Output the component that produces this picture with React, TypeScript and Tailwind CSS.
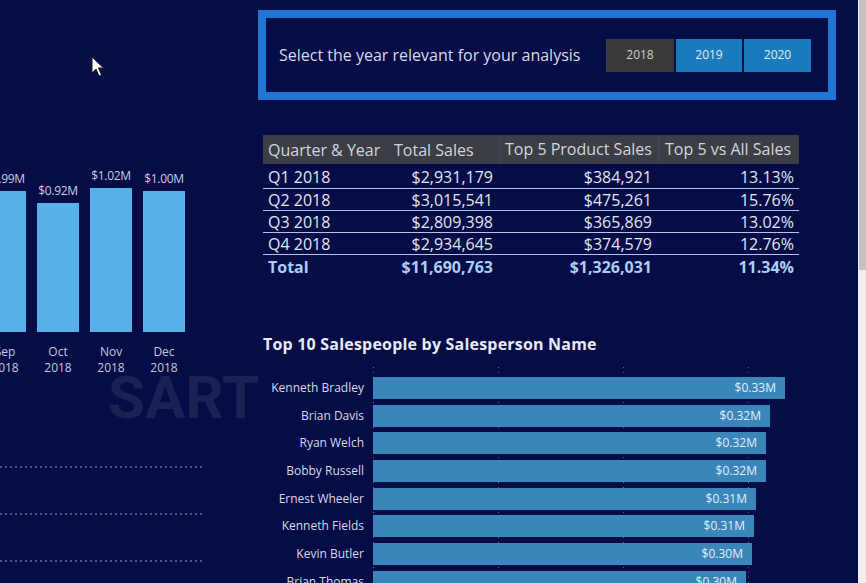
import React from 'react';

const months = [
  { value: '$0.99M', height: 141, month: 'Sep' },
  { value: '$0.92M', height: 129, month: 'Oct' },
  { value: '$1.02M', height: 144, month: 'Nov' },
  { value: '$1.00M', height: 141, month: 'Dec' },
];

const quarters = [
  { q: 'Q1 2018', total: '$2,931,179', top5: '$384,921', pct: '13.13%' },
  { q: 'Q2 2018', total: '$3,015,541', top5: '$475,261', pct: '15.76%' },
  { q: 'Q3 2018', total: '$2,809,398', top5: '$365,869', pct: '13.02%' },
  { q: 'Q4 2018', total: '$2,934,645', top5: '$374,579', pct: '12.76%' },
];

const salespeople = [
  { name: 'Kenneth Bradley', value: '$0.33M', width: 412 },
  { name: 'Brian Davis', value: '$0.32M', width: 397 },
  { name: 'Ryan Welch', value: '$0.32M', width: 393 },
  { name: 'Bobby Russell', value: '$0.32M', width: 393 },
  { name: 'Ernest Wheeler', value: '$0.31M', width: 383 },
  { name: 'Kenneth Fields', value: '$0.31M', width: 381 },
  { name: 'Kevin Butler', value: '$0.30M', width: 379 },
  { name: 'Brian Thomas', value: '$0.30M', width: 373 },
];

const Cursor = () => (
  <svg
    className="absolute left-[91px] top-[56px]"
    width="14"
    height="22"
    viewBox="0 0 14 22"
  >
    <path
      d="M1 1 L1 17 L5 13 L8 20 L10.5 19 L7.5 12 L12.5 12 Z"
      fill="#ffffff"
      stroke="#1a1a1a"
      strokeWidth="1"
      strokeLinejoin="round"
    />
  </svg>
);

const DottedLine = () => (
  <div className="h-[2px] w-[205px] bg-[repeating-linear-gradient(90deg,#4a5590_0_2px,transparent_2px_5px)]" />
);

const MonthlyChart = () => (
  <div className="relative w-[258px] shrink-0">
    <Cursor />
    {/* value labels + bars */}
    <div className="mt-[170px] ml-[-16px] flex h-[162px] items-end gap-[11px]">
      {months.map((m) => (
        <div key={m.month} className="flex w-[42px] flex-col items-center">
          <span className="mb-[5px] text-[12px] leading-[14px] tracking-[-0.3px] text-[#c9cde0] whitespace-nowrap">
            {m.value}
          </span>
          <div className="w-[42px] bg-[#58b0e9]" style={{ height: m.height }} />
        </div>
      ))}
    </div>
    {/* axis labels */}
    <div className="mt-[12px] ml-[-16px] flex gap-[11px]">
      {months.map((m) => (
        <div
          key={m.month}
          className="flex w-[42px] flex-col items-center text-[12px] leading-[16px] text-[#c4c8da]"
        >
          <span>{m.month}</span>
          <span>2018</span>
        </div>
      ))}
    </div>
    <div className="ml-[108px] font-['Roboto',sans-serif] text-[60px] font-bold leading-[44px] text-[#1a2253]">
      SART
    </div>
    <div className="mt-[46px] flex flex-col gap-[45px]">
      <DottedLine />
      <DottedLine />
      <DottedLine />
    </div>
  </div>
);

const YearSlicer = () => (
  <div className="mt-[10px] flex h-[90px] w-[578px] shrink-0 items-center border-[8px] border-[#1f74d4] pl-[13px] pr-[17px]">
    <span className="text-[16px] text-[#d6daea]">
      Select the year relevant for your analysis
    </span>
    <div className="ml-auto flex gap-[2px] text-[12px]">
      <button className="h-[33px] w-[68px] bg-[#3a3a3b] text-[#cfcfcf]">2018</button>
      <button className="h-[33px] w-[66px] bg-[#1b7abc] text-[#e4ecf6]">2019</button>
      <button className="h-[33px] w-[67px] bg-[#1b7abc] text-[#e4ecf6]">2020</button>
    </div>
  </div>
);

const SalesTable = () => (
  <div className="mt-[35px] ml-[5px] w-[536px] shrink-0 text-[16px]">
    <div className="grid h-[29px] grid-cols-[126px_110px_159px_141px] items-center bg-[#3c3e45] text-[#d4d6dc] whitespace-nowrap">
      <span className="pl-[5px]">Quarter &amp; Year</span>
      <span className="pl-[5px]">Total Sales</span>
      <span className="h-full border-l border-[#46484f] pl-[5px] leading-[29px]">Top 5 Product Sales</span>
      <span className="h-full border-l border-[#46484f] pl-[6px] leading-[29px]">Top 5 vs All Sales</span>
    </div>
    {quarters.map((r, i) => (
      <div
        key={r.q}
        className={`grid grid-cols-[126px_110px_159px_141px] items-center border-b border-[#b9c2e4] text-[#e1e5f2] ${
          i === 0 ? 'h-[25px] pt-[2px]' : 'h-[22px]'
        }`}
      >
        <span className="pl-[5px] leading-[20px]">{r.q}</span>
        <span className="pr-[6px] text-right leading-[20px]">{r.total}</span>
        <span className="pr-[6px] text-right leading-[20px]">{r.top5}</span>
        <span className="pr-[5px] text-right leading-[20px]">{r.pct}</span>
      </div>
    ))}
    <div className="grid h-[24px] grid-cols-[126px_110px_159px_141px] items-center font-bold text-[#a9cff6]">
      <span className="pl-[5px]">Total</span>
      <span className="pr-[6px] text-right">$11,690,763</span>
      <span className="pr-[6px] text-right">$1,326,031</span>
      <span className="pr-[5px] text-right">11.34%</span>
    </div>
  </div>
);

const SalespeopleChart = () => (
  <div className="mt-[55px] ml-[5px] shrink-0">
    <h3 className="text-[16px] font-bold leading-[20px] tracking-[0.2px] text-[#e8eaf2]">
      Top 10 Salespeople by Salesperson Name
    </h3>
    <div className="relative mt-[13px] pt-[10px]">
      {/* vertical gridlines */}
      <svg className="absolute left-[110px] top-0 h-[300px] w-[420px]">
        {[0.5, 125.5, 250.5, 375.5].map((x) => (
          <line
            key={x}
            x1={x}
            y1={0}
            x2={x}
            y2={300}
            stroke="#56609a"
            strokeWidth="1"
            strokeDasharray="1 4"
          />
        ))}
      </svg>
      <div className="relative flex flex-col gap-[5.7px]">
        {salespeople.map((p) => (
          <div key={p.name} className="flex h-[22px] items-center gap-[9px]">
            <span className="w-[101px] text-right text-[12px] text-[#d6dae8] whitespace-nowrap">
              {p.name}
            </span>
            <div
              className="flex h-[22px] items-center justify-end bg-[#3a86ba] pr-[9px] text-[12px] text-[#e6eef8]"
              style={{ width: p.width }}
            >
              {p.value}
            </div>
          </div>
        ))}
      </div>
    </div>
  </div>
);

export default function App() {
  return (
    <div className="flex h-[583px] w-[866px] overflow-hidden bg-[#050c46] font-['Open_Sans',sans-serif]">
      <div className="flex w-[858px] shrink-0">
        <MonthlyChart />
        <div className="flex flex-1 flex-col">
          <YearSlicer />
          <SalesTable />
          <SalespeopleChart />
        </div>
      </div>
      <div className="w-[8px] bg-[#efefef]">
        <div className="ml-[1px] h-[270px] bg-[#c3c3c3]" />
      </div>
    </div>
  );
}
